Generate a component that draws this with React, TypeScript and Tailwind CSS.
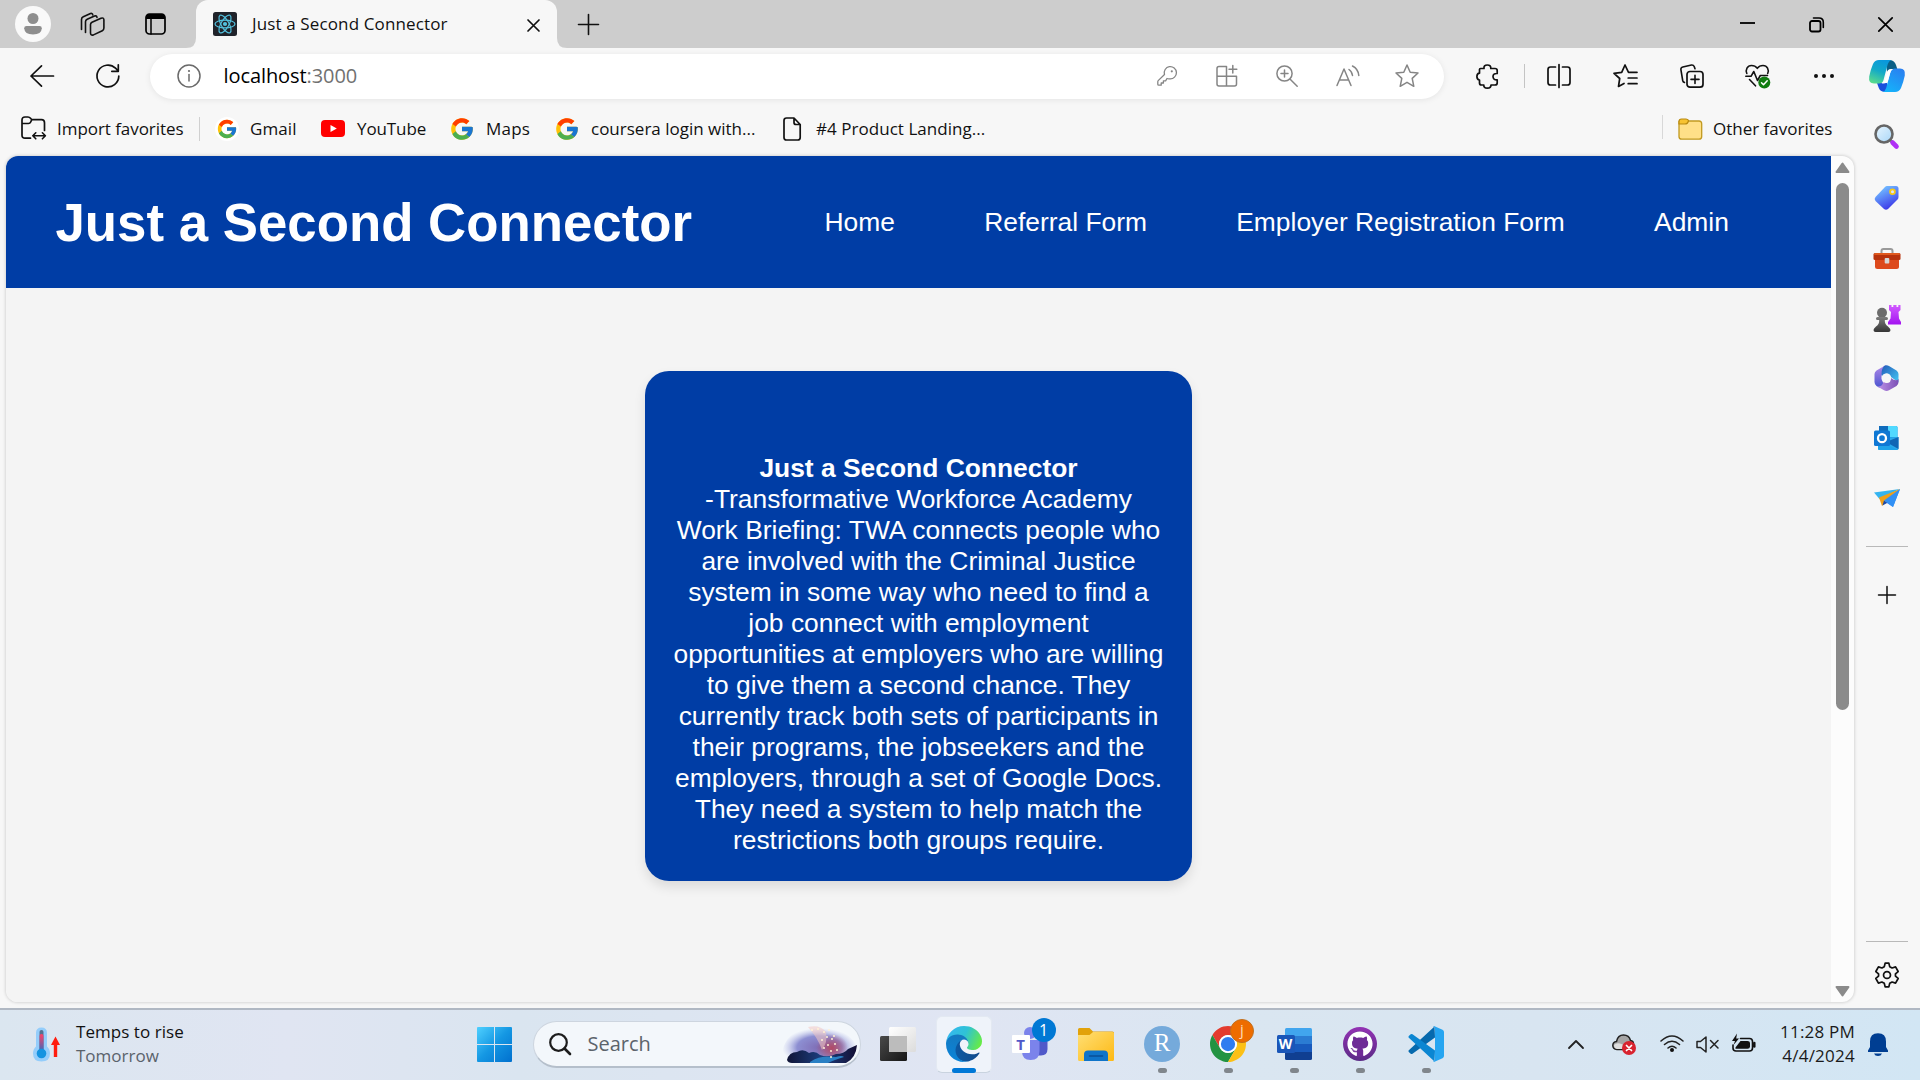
import React from "react";
import { FcGoogle } from "react-icons/fc";
import { FaGithub } from "react-icons/fa";

type SvgProps = {
  w: number;
  h: number;
  className?: string;
  children: React.ReactNode;
  box?: string;
};

function Svg({ w, h, className = "", children, box }: SvgProps) {
  return (
    <svg
      width={w}
      height={h}
      viewBox={box ?? `0 0 ${w} ${h}`}
      fill="none"
      stroke="none"
      strokeLinecap="round"
      strokeLinejoin="round"
      className={`block shrink-0 overflow-visible ${className}`}
    >
      {children}
    </svg>
  );
}

/* ---------- Tab strip ---------- */

function TabStrip() {
  return (
    <div className="flex h-12 shrink-0 bg-[#cdcdcd]">
      <div className="flex w-[196px] items-center pl-[15px]">
        <div className="flex size-9 items-center justify-center rounded-full bg-[#f9f9f9]">
          <Svg w={18} h={22}>
            <circle cx="9" cy="5.5" r="5.5" fill="#8e8e8e" />
            <path d="M2.5 13h13q2.300 0 2.300 2.300Q17.500 21.500 9 21.500T.2 15.300Q.2 13 2.500 13Z" fill="#8e8e8e" />
          </Svg>
        </div>
        <Svg w={25} h={24} className="ml-[29px]">
          <g stroke="#111" strokeWidth="1.6" fill="#cdcdcd">
            <path d="M1.500 17.500V7.500Q1.500 5.600 3.300 4.800L10.500 1.500Q12.500 1 12.800 3" />
            <path d="M5.500 20.500V9.800Q5.500 8 7.200 7.200L14.500 4Q16.700 3.300 17 5.500" />
            <path d="M10.500 12.600Q10.500 11 12 10.200L21 6.200Q23.800 5.300 23.900 7.800V16Q23.900 17.900 22.300 18.700L13.500 22.900Q10.600 23.700 10.500 21Z" />
          </g>
        </Svg>
        <Svg w={21} h={22} className="ml-[40px]">
          <rect x="1" y="1" width="19" height="20" rx="3.500" stroke="#000" strokeWidth="1.700" />
          <path d="M1 6V4.500Q1 1 4.500 1H16.500Q20 1 20 4.500V6Z" fill="#000" />
          <path d="M6 6V21" stroke="#000" strokeWidth="1.500" />
        </Svg>
      </div>
      <div className="relative flex w-[361px] items-center rounded-t-[12px] bg-[#f7f7f7] pl-[17px]">
        <Svg w={10} h={10} className="absolute -left-[10px] bottom-0">
          <path d="M10 0V10H0Q10 10 10 0Z" fill="#f7f7f7" />
        </Svg>
        <Svg w={10} h={10} className="absolute -right-[10px] bottom-0">
          <path d="M0 0V10H10Q0 10 0 0Z" fill="#f7f7f7" />
        </Svg>
        <Svg w={24} h={24}>
          <rect width="24" height="24" rx="2.500" fill="#20232a" />
          <g stroke="#53c1de" strokeWidth="1.200">
            <ellipse cx="12" cy="12" rx="10" ry="3.900" />
            <ellipse cx="12" cy="12" rx="10" ry="3.900" transform="rotate(60 12 12)" />
            <ellipse cx="12" cy="12" rx="10" ry="3.900" transform="rotate(120 12 12)" />
          </g>
          <circle cx="12" cy="12" r="2.100" fill="#53c1de" />
        </Svg>
        <span className="ml-[15px] w-[275px] pb-px text-[17px] tracking-[0.13px]">Just a Second Connector</span>
        <Svg w={13} h={13} className="mt-[2px]">
          <path d="M1 1L12 12M12 1L1 12" stroke="#111" strokeWidth="1.700" />
        </Svg>
      </div>
      <div className="flex flex-1 items-center pl-[21px]">
        <Svg w={21} h={21}>
          <path d="M10.500 .5V20.500M.5 10.500H20.500" stroke="#111" strokeWidth="1.600" />
        </Svg>
      </div>
      <div className="flex w-[180px] items-center">
        <Svg w={15} h={2} className="mb-[2px]">
          <path d="M0 1H15" stroke="#000" strokeWidth="1.800" strokeLinecap="butt" />
        </Svg>
        <Svg w={15} h={15} className="ml-[54px]">
          <rect x="1" y="4" width="10.500" height="10.500" rx="2" stroke="#000" strokeWidth="1.800" />
          <path d="M4.500 1H10Q14.300 1 14.300 5.300V10.500" stroke="#000" strokeWidth="1.600" />
        </Svg>
        <Svg w={15} h={15} className="ml-[54px]">
          <path d="M.8 .8L14.200 14.200M14.200 .8L.8 14.200" stroke="#000" strokeWidth="1.700" />
        </Svg>
      </div>
    </div>
  );
}

/* ---------- Toolbar ---------- */

function Copilot() {
  return (
    <Svg w={36} h={32} className="ml-[35px]">
      <defs>
        <linearGradient id="cpA" x1="0.600" y1="0" x2="0.200" y2="1">
          <stop offset="0" stopColor="#0a98dc" />
          <stop offset="0.450" stopColor="#12a9c8" />
          <stop offset="1" stopColor="#5bdc8b" />
        </linearGradient>
        <linearGradient id="cpB" x1="0.800" y1="0" x2="0.200" y2="1">
          <stop offset="0" stopColor="#2a80f0" />
          <stop offset="1" stopColor="#14b4fb" />
        </linearGradient>
      </defs>
      <path d="M17 0H21Q25.500 .3 27 5L28.300 9H22Q19 9 18 12Z" fill="#0b5f86" />
      <path d="M8 23H18L20 32H15.500Q11 31.500 9.800 28Z" fill="#1a4fdd" />
      <path d="M10 0H22.500Q19.800 .8 18.800 4L14.500 20Q13.500 23.500 10 23.500H5Q-.8 23.500 .2 16.500Q1.800 9 4 4Q5.800 0 10 0Z" fill="url(#cpA)" />
      <path d="M26 32H13.500Q16.200 31.200 17.200 28L21.500 12Q22.500 8.500 26 8.500H31Q36.800 8.500 35.800 15.500Q34.200 23 32 28Q30.200 32 26 32Z" fill="url(#cpB)" />
      <path d="M18.300 12Q19.200 9.300 22.300 9.300H24Q21.800 10 21 13.500L19 20.500Q18 23.400 14.500 23.400H12.500Q15 22.500 15.800 20Z" fill="#fff" />
    </Svg>
  );
}

function Toolbar() {
  return (
    <div className="flex h-[57px] shrink-0 items-center pl-[30px]">
      <Svg w={24} h={22} className="mb-[2px]">
        <path d="M23.500 11H1M11.500 .8L1 11L11.500 21.200" stroke="#111" strokeWidth="1.700" />
      </Svg>
      <Svg w={24} h={24} className="mb-px ml-[42px]">
        <path d="M22.800 12A10.900 10.900 0 1 1 19.500 4.200L22.300 7M22.300 .8V7.300H15.800" stroke="#111" strokeWidth="1.700" />
      </Svg>
      <div className="ml-[30px] flex h-[45px] w-[1294px] items-center rounded-full bg-white pb-px pl-[27px] shadow-[0_1px_6px_rgba(0,0,0,0.08)]">
        <Svg w={24} h={24}>
          <circle cx="12" cy="12" r="11" stroke="#6a6a6a" strokeWidth="1.500" />
          <path d="M12 10.500V17" stroke="#6a6a6a" strokeWidth="1.500" />
          <circle cx="12" cy="7" r="1.100" fill="#6a6a6a" />
        </Svg>
        <span className="ml-[22.500px] w-[933.500px] text-[20px] tracking-[-0.08px] text-black">
          localhost<span className="text-[#717171]">:3000</span>
        </span>
        <Svg w={20} h={20}>
          <path d="M12.800 12.800A6.100 6.100 0 1 0 7.500 8.500L1.200 14.600Q.8 15 .8 15.700V18.300Q.8 19.200 1.700 19.200H4.200V17H6.400V14.800H8.600L10 12.500Q11.500 13.100 12.800 12.800Z" stroke="#858585" strokeWidth="1.300" />
          <circle cx="14.800" cy="5.300" r="1.100" fill="#858585" />
        </Svg>
        <Svg w={22} h={22} className="ml-[39px]">
          <path d="M10.500 1.500H3Q1 1.500 1 3.500V19Q1 21 3 21H18.500Q20.500 21 20.500 19V11.200H1M10.500 1.500V21M16.800 .5V8M13 4.200H20.800" stroke="#858585" strokeWidth="1.500" />
        </Svg>
        <Svg w={22} h={22} className="ml-[38px]">
          <circle cx="8.500" cy="8.500" r="7.600" stroke="#858585" strokeWidth="1.500" />
          <path d="M14.200 14.200L21.200 21.200M8.500 5V12M5 8.500H12" stroke="#858585" strokeWidth="1.500" />
        </Svg>
        <Svg w={24} h={22} className="ml-[38px]">
          <path d="M1 20.500L8 4L15 20.500M3.500 15H12.500M13 4.500Q16 6.500 16.500 10.500M16.500 1Q22.300 4 22.800 10.500" stroke="#858585" strokeWidth="1.500" />
        </Svg>
        <Svg w={24} h={24} className="ml-[35px]">
          <path d="M12 1L15.200 8.300L23 9L17.200 14.400L18.800 22.300L12 18.300L5.200 22.300L6.800 14.400L1 9L8.800 8.300Z" stroke="#858585" strokeWidth="1.500" />
        </Svg>
      </div>
      <div className="mb-px flex items-center">
        <Svg w={23} h={25} className="ml-[32px]">
          <path d="M4.500 4.500H8Q7.500 1 11.300 1T14.800 4.500H19Q21.200 4.500 21.200 6.500V9.500Q17 9.200 17 12.600T21.200 15.800V19Q21.200 21 19 21H15Q15 24.200 11.300 24.200T7.800 21H5.500Q3.500 21 3.500 19V16Q.9 15.800 .9 12.600T3.500 9.200V5.500Q3.500 4.500 4.500 4.500Z" stroke="#111" strokeWidth="1.700" />
        </Svg>
        <div className="ml-[25px] h-6 w-px bg-[#c4c4c4]" />
        <Svg w={24} h={24} className="ml-[22px]">
          <path d="M12 .5V23.500M8.500 3H3.500Q1 3 1 5.500V18.500Q1 21 3.500 21H8.500M15.500 3H20.500Q23 3 23 5.500V18.500Q23 21 20.500 21H15.500" stroke="#111" strokeWidth="1.700" />
        </Svg>
        <Svg w={25} h={24} className="ml-[42px]">
          <path d="M18 8.300H15.500L12 1L8.700 8.300L1 9.300L6.700 14.500L5.500 22.500L11 19.500M16.500 8.300H24M15.200 14H24M15.200 19.700H24" stroke="#111" strokeWidth="1.700" />
        </Svg>
        <Svg w={24} h={24} className="ml-[42px]">
          <path d="M4.500 18.500Q3 18 2.700 16.500L.9 5.600Q.7 3.500 2.800 3L11.500 1Q13.500 .8 14.200 2.500L15 4.800" stroke="#111" strokeWidth="1.600" />
          <rect x="7" y="7.500" width="16" height="15.700" rx="3" stroke="#111" strokeWidth="1.700" />
          <path d="M15 11.300V19.500M11 15.400H19" stroke="#111" strokeWidth="1.600" />
        </Svg>
        <Svg w={25} h={24} className="ml-[41px]">
          <path d="M1.800 9.500C.2 6 2.300 1.500 6.500 1.500C9.500 1.500 11.300 3 12.300 4.300C13.300 3 15 1.500 18 1.500C22.300 1.500 24.300 6 22.700 9.500M.8 12.300H6L8.800 7.500L12.500 16.500L15.300 11.500H22.500M4.500 15.500L10.500 21.800" stroke="#111" strokeWidth="1.600" />
          <circle cx="19.300" cy="18.500" r="6" fill="#107c10" />
          <path d="M16.500 18.700L18.500 20.700L22.200 16.700" stroke="#fff" strokeWidth="1.500" />
        </Svg>
        <Svg w={20} h={4} className="ml-[44px]">
          <circle cx="2" cy="2" r="2" fill="#111" />
          <circle cx="10" cy="2" r="2" fill="#111" />
          <circle cx="18" cy="2" r="2" fill="#111" />
        </Svg>
        <Copilot />
      </div>
    </div>
  );
}

/* ---------- Favorites bar ---------- */

function FavoritesBar() {
  return (
    <div className="flex h-[51px] shrink-0 items-center pb-[4px] pl-[21px] text-[17px]">
      <Svg w={25} h={24} className="mb-px">
        <path d="M9.500 22.200H4Q1 22.200 1 19.200V4Q1 1 4 1H7Q8.500 1 9.500 2.200L10.800 3.700H20.500Q23.500 3.700 23.500 6.700V14.500M1 7.500H7.500Q9 7.500 9.700 6L10.800 3.700" stroke="#111" strokeWidth="1.700" />
        <path d="M12.200 19.800H24M14.800 16.800L11.800 19.800L14.800 22.800M21.400 16.800L24.400 19.800L21.400 22.800" stroke="#111" strokeWidth="1.600" />
      </Svg>
      <span className="ml-[11px] w-[142px] tracking-[-0.05px]">Import favorites</span>
      <div className="h-6 w-px bg-[#d0d0d0]" />
      <div className="ml-[15px] flex size-6 items-center justify-center rounded-full bg-white">
        <FcGoogle size={22} />
      </div>
      <span className="ml-[11px] w-[71px] tracking-[0.1px]">Gmail</span>
      <Svg w={24} h={17}>
        <rect width="24" height="17" rx="4" fill="#f00" />
        <path d="M9.500 5V12L15.800 8.500Z" fill="#fff" />
      </Svg>
      <span className="ml-[12px] w-[92px] tracking-[-0.1px]">YouTube</span>
      <FcGoogle size={26} className="shrink-0" />
      <span className="ml-[11px] w-[68px] tracking-[0.2px]">Maps</span>
      <FcGoogle size={26} className="shrink-0" />
      <span className="ml-[11px] w-[192px]">coursera login with...</span>
      <Svg w={18} h={24}>
        <path d="M1 3.500Q1 1 3.500 1H11L17.200 7.500V20.500Q17.200 23 14.700 23H3.500Q1 23 1 20.500ZM11 1V5.500Q11 7.500 13 7.500H17.200" stroke="#111" strokeWidth="1.700" />
      </Svg>
      <span className="ml-[15px] w-[846px] tracking-[0.04px]">#4 Product Landing...</span>
      <div className="mb-1 h-6 w-px bg-[#d8d8d8]" />
      <Svg w={25} h={22} className="ml-[15px]">
        <path d="M1 3.500V18.500Q1 21.200 3.700 21.200H21Q23.700 21.200 23.700 18.500V6Q23.700 3 21 3H10Z" fill="#ffe088" stroke="#c29a20" strokeWidth="1.300" />
        <path d="M1 3.500Q1 1 3.500 1H8Q11 1.500 10.300 3.500Q9.500 6 7 6H1Z" fill="#f7c331" stroke="#b98a10" strokeWidth="1.200" />
      </Svg>
      <span className="ml-[10px]">Other favorites</span>
    </div>
  );
}

/* ---------- Page ---------- */

const links = ["Home", "Referral Form", "Employer Registration Form", "Admin"];

function WebPage() {
  return (
    <div className="ml-[6px] flex h-[846px] w-[1848px] overflow-hidden rounded-[12px] bg-[#fcfcfc] shadow-[0_0_3px_1px_rgba(0,0,0,0.13)]">
      <div className="w-[1825px] bg-[#f4f4f4] font-['Liberation_Sans',Arial,sans-serif] text-white">
        <nav className="flex h-[132px] items-center bg-[#003da5] pl-[49.500px]">
          <h1 className="w-[769px] pt-[2px] text-[52.800px] leading-[60px] font-bold">Just a Second Connector</h1>
          <ul className="flex gap-[89.300px] text-[26.400px] leading-[31px]">
            {links.map((label) => (
              <li key={label} className="whitespace-nowrap">{label}</li>
            ))}
          </ul>
        </nav>
        <section className="mx-auto mt-[83px] h-[510px] w-[547px] rounded-[24px] bg-[#003da5] px-7 pt-[82px] text-center text-[26.400px] leading-[31px] shadow-[0_6px_12px_rgba(0,0,0,0.1)]">
          <h2 className="font-bold">Just a Second Connector</h2>
          <p>
            -Transformative Workforce Academy Work Briefing: TWA connects people who are involved with
            the Criminal Justice system in some way who need to find a job connect with employment
            opportunities at employers who are willing to give them a second chance. They currently
            track both sets of participants in their programs, the jobseekers and the employers,
            through a set of Google Docs. They need a system to help match the restrictions both groups
            require.
          </p>
        </section>
      </div>
      <div className="flex flex-1 flex-col items-center pt-[6px] pb-[5px]">
        <Svg w={15} h={11}>
          <path d="M7.500 1.500L13.500 10H1.500Z" fill="#8b8b8b" stroke="#8b8b8b" strokeWidth="2" />
        </Svg>
        <div className="mt-[10px] h-[527px] w-[13px] rounded-full bg-[#8b8b8b]" />
        <Svg w={15} h={11} className="mt-auto">
          <path d="M7.500 9.500L13.500 1H1.500Z" fill="#8b8b8b" stroke="#8b8b8b" strokeWidth="2" />
        </Svg>
      </div>
    </div>
  );
}

/* ---------- Sidebar ---------- */

function SideSlot({ children }: { children: React.ReactNode }) {
  return <div className="flex h-[60.200px] w-full shrink-0 items-center justify-center">{children}</div>;
}

function Sidebar() {
  return (
    <aside className="flex w-[63px] flex-col items-center pt-[2px]">
      <SideSlot>
        <Svg w={25} h={25} className="-mt-[2px]">
          <defs>
            <linearGradient id="lens" x1="0" y1="0" x2="1" y2="1">
              <stop offset="0" stopColor="#e9f6ff" />
              <stop offset="1" stopColor="#a8d6f8" />
            </linearGradient>
          </defs>
          <path d="M16 16L19 19" stroke="#888" strokeWidth="3" />
          <path d="M18.500 18.500L22.500 22.500" stroke="#b030f5" strokeWidth="4.600" />
          <circle cx="10" cy="10" r="8.500" fill="url(#lens)" stroke="#666" strokeWidth="2.600" />
        </Svg>
      </SideSlot>
      <SideSlot>
        <Svg w={25} h={25}>
          <defs>
            <linearGradient id="tag" x1="0.200" y1="0.200" x2="0.600" y2="1">
              <stop offset="0" stopColor="#6db3ff" />
              <stop offset="1" stopColor="#3b35e8" />
            </linearGradient>
          </defs>
          <path d="M13 1H22Q24.500 1 24.500 3.500V12Q24.500 13.500 23.500 14.500L14 24Q12 25.500 10 24L1.500 16Q-.3 14 1.500 12L11 2Q12 1 13 1Z" fill="url(#tag)" />
          <circle cx="18.500" cy="6.800" r="2.400" fill="#dbe4ff" stroke="#f8c916" strokeWidth="1.800" />
        </Svg>
      </SideSlot>
      <SideSlot>
        <Svg w={28} h={21} className="mt-[2px]">
          <path d="M8.500 6V3Q8.500 1 10.500 1H17.500Q19.500 1 19.500 3V6" stroke="#9a9a9a" strokeWidth="2" />
          <path d="M2 10H26V18.500Q26 21 23.500 21H4.500Q2 21 2 18.500Z" fill="#dd4a1d" />
          <path d="M2 5H26Q27.500 5 27.500 6.500V11Q27.500 12 26 12H2Q.5 12 .5 11V6.500Q.5 5 2 5Z" fill="#b8330c" />
          <path d="M2 5H26L27 7H1Z" fill="#e0591d" />
          <rect x="11.700" y="10" width="4.600" height="5.500" rx="1" fill="#d7d7d7" />
        </Svg>
      </SideSlot>
      <SideSlot>
        <Svg w={28} h={28}>
          <defs>
            <linearGradient id="rook" x1="0" y1="0" x2="0" y2="1">
              <stop offset="0" stopColor="#d15bff" />
              <stop offset="1" stopColor="#a312f0" />
            </linearGradient>
            <linearGradient id="pawn" x1="0" y1="0" x2="0" y2="1">
              <stop offset="0" stopColor="#7c7c7c" />
              <stop offset="1" stopColor="#363636" />
            </linearGradient>
          </defs>
          <path d="M16 1H18.500V3H20.300V1H23.500V3H25.300V1H27.500V6L25.500 8L26 14.500L28 18V20.500H15V18L17.500 14.500L18 8L16 6Z" fill="url(#rook)" />
          <circle cx="9" cy="8.700" r="5" fill="#6c6c6c" />
          <path d="M4.500 13Q3 13 3 14.500T4.500 16H6.200Q6.500 20 3 22.500Q.5 24.500 .5 26Q.5 28 2.500 28H15.500Q17.500 28 17.500 26Q17.500 24.500 15 22.500Q11.500 20 11.800 16H13.500Q15 16 15 14.500T13.500 13Z" fill="url(#pawn)" />
        </Svg>
      </SideSlot>
      <SideSlot>
        <Svg w={25} h={26}>
          <defs>
            <linearGradient id="m1" x1="0" y1="0" x2="0" y2="1">
              <stop offset="0" stopColor="#b48ae8" />
              <stop offset="1" stopColor="#4a55d0" />
            </linearGradient>
            <linearGradient id="m2" x1="0" y1="0" x2="1" y2="1">
              <stop offset="0" stopColor="#235bb8" />
              <stop offset="1" stopColor="#45c8f5" />
            </linearGradient>
            <linearGradient id="m3" x1="0" y1="0" x2="1" y2="0">
              <stop offset="0" stopColor="#bd93e8" />
              <stop offset="1" stopColor="#7b4fb5" />
            </linearGradient>
          </defs>
          <path d="M12 0L2.500 5.500Q.5 7 .5 9V17Q.5 19.500 2.500 21L5 22.500Q8.500 23 9 20V17.500L7.500 14V11Q7.800 8.500 10 7.800L12 6.500Z" fill="url(#m1)" />
          <path d="M10 1Q12.500 -.5 15 1L22.500 5.500Q24.500 7 24.500 9V17.500L17 12Q16 8.500 12.500 8.500Q9.500 8.500 8 11Q6.500 6 10 1Z" fill="url(#m2)" />
          <path d="M24.500 14V17Q24.500 19.500 22.500 21L15 25.300Q12.500 26.500 10 25.300L3.500 21.500Q8 22 9.500 17Q13 19 16 17L17 13Q22 17 24.500 14Z" fill="url(#m3)" />
          <circle cx="12.500" cy="13" r="4.600" fill="#f7f7f7" />
        </Svg>
      </SideSlot>
      <SideSlot>
        <Svg w={25} h={24}>
          <rect x="5" y="0" width="18.500" height="14" rx="1.500" fill="#1490df" />
          <path d="M14 0H22Q23.500 0 23.500 1.500V11H14Z" fill="#50d9ff" />
          <path d="M5 2V0H14V6H5Z" fill="#0f6cbd" />
          <path d="M4 12L24.500 11V22.500Q24.500 24 23 24H5.500Q4 24 4 22.500Z" fill="#28a8ea" />
          <path d="M24.500 11V23L12 16Z" fill="#1066b5" />
          <path d="M4 14L24 24H5.500Q4 24 4 22.500Z" fill="#1ea3ea" />
          <rect x="0" y="4.500" width="16" height="15.500" rx="1.500" fill="#0f78d4" />
          <circle cx="8" cy="12.200" r="4" stroke="#fff" strokeWidth="2.300" />
        </Svg>
      </SideSlot>
      <SideSlot>
        <Svg w={26} h={18} className="mb-px">
          <path d="M0 3.500L26 0L5.500 10Z" fill="#35b4f0" />
          <path d="M26 0L19 18L10 12Z" fill="#3190f5" />
          <path d="M26 0L8 17L5 8.500Z" fill="#f0a01a" />
          <path d="M8.500 16.500L13.500 13.800L10 11.500Z" fill="#1c49a8" />
          <path d="M26 0L10 11.500L19 18Z" fill="#3190f5" />
        </Svg>
      </SideSlot>
      <div className="mt-[18px] h-px w-[42px] bg-[#b9b9b9]" />
      <Svg w={18} h={18} className="mt-[39px]">
        <path d="M9 .5V17.500M.5 9H17.500" stroke="#111" strokeWidth="1.500" />
      </Svg>
      <div className="mt-auto h-px w-[42px] bg-[#b9b9b9]" />
      <Svg w={26} h={26} box="0 0 24 24" className="mt-[20px] mb-[20px]">
        <path
          d="M10.300 1H13.700L14.500 4.300L16.700 5.500L19.900 4.500L22.300 8.800L19.800 11V13L22.300 15.200L19.900 19.500L16.700 18.500L14.500 19.700L13.700 23H10.300L9.500 19.700L7.300 18.500L4.100 19.500L1.700 15.200L4.200 13V11L1.700 8.800L4.100 4.500L7.300 5.500L9.500 4.300Z"
          stroke="#111"
          strokeWidth="1.600"
        />
        <circle cx="12" cy="12" r="3.200" stroke="#111" strokeWidth="1.600" />
      </Svg>
    </aside>
  );
}

/* ---------- Taskbar ---------- */

function TaskSlot({ children, dot = false }: { children: React.ReactNode; dot?: boolean }) {
  return (
    <div className="relative flex h-[57px] w-[66px] shrink-0 items-center justify-center">
      {children}
      {dot && <div className="absolute bottom-0 left-[29px] h-[5px] w-[9px] rounded-full bg-[#80868c]" />}
    </div>
  );
}

function SearchArt() {
  return (
    <Svg w={76} h={40}>
      <defs>
        <radialGradient id="sky" cx="0.500" cy="0.600" r="0.500">
          <stop offset="0" stopColor="#7e6cb4" />
          <stop offset="0.600" stopColor="#8d8fd2" />
          <stop offset="1" stopColor="#b9bfe9" stopOpacity="0" />
        </radialGradient>
        <radialGradient id="glow" cx="0.500" cy="0.500" r="0.500">
          <stop offset="0" stopColor="#b34a64" />
          <stop offset="1" stopColor="#b34a64" stopOpacity="0" />
        </radialGradient>
        <linearGradient id="rocks" x1="0" y1="0" x2="1" y2="0">
          <stop offset="0" stopColor="#101436" />
          <stop offset="0.500" stopColor="#1d3f80" />
          <stop offset="1" stopColor="#140f33" />
        </linearGradient>
      </defs>
      <path d="M0 30Q2 12 20 5Q36 -4 54 4Q68 10 75 22Q74 36 60 39H8Q2 37 0 30Z" fill="url(#sky)" />
      <ellipse cx="50" cy="24" rx="16" ry="14" fill="url(#glow)" />
      <path d="M26 3Q38 0 44 8Q46 18 40 26Q36 14 26 3Z" fill="#f3c9c4" opacity="0.550" />
      <path d="M5 36Q7 28 15 28Q21 24 27 29Q33 26 38 31Q46 34 54 30Q62 30 66 25L75 21Q74 34 64 39H10Q6 39 5 36Z" fill="url(#rocks)" />
      <path d="M28 38Q38 31 54 33Q60 31 62 33Q52 36 46 39H28Z" fill="#2a80c4" />
      <g fill="#fff2d4">
        {[[36, 5], [42, 8], [47, 6], [45, 13], [50, 15], [40, 16], [53, 20], [46, 21], [55, 26], [49, 27], [52, 12], [42, 24], [30, 6], [49, 33]].map(
          ([x, y]) => (
            <circle key={`${x}-${y}`} cx={x} cy={y} r="1" />
          ),
        )}
      </g>
    </Svg>
  );
}

function Taskbar() {
  return (
    <div className="flex h-[72px] shrink-0 items-center border-t-2 border-[#b0b8c3] bg-[linear-gradient(to_right,#dbe6f0,#e0e5f2_15%,#dae5f0_27%,#e0e5f3_50%,#dae6f1_65%,#d8e5f1_80%,#d2e6f4)] pb-[2px]">
      <div className="flex w-[477px] items-center pl-[33px]">
        <Svg w={27} h={35}>
          <defs>
            <linearGradient id="thermo" gradientUnits="userSpaceOnUse" x1="8" y1="8" x2="8" y2="26">
              <stop offset="0" stopColor="#f5436b" />
              <stop offset="1" stopColor="#2072c8" />
            </linearGradient>
          </defs>
          <path d="M3 6Q3 .5 8.500 .5T14 6V19.500Q17 22 17 26.500Q17 34.500 8.500 34.500T0 26.500Q0 22 3 19.500Z" fill="#94cdfb" />
          <path d="M8.500 5V25" stroke="#56718f" strokeWidth="4" />
          <path d="M8.500 9V25" stroke="url(#thermo)" strokeWidth="4" />
          <circle cx="8.500" cy="26.500" r="4.800" fill="#1493e0" />
          <path d="M22.500 9.500L27 18H24.200V30H20.800V18H18Z" fill="#ff1c0e" />
        </Svg>
        <div className="ml-[16px] flex flex-col pb-px text-[17px] leading-6">
          <span className="tracking-[0.05px] text-[#111]">Temps to rise</span>
          <span className="text-[#5a626b]">Tomorrow</span>
        </div>
      </div>
      <Svg w={35} h={35}>
        <defs>
          <linearGradient id="win" gradientUnits="userSpaceOnUse" x1="0" y1="0" x2="35" y2="35">
            <stop offset="0" stopColor="#4fd0ff" />
            <stop offset="0.500" stopColor="#1497e3" />
            <stop offset="1" stopColor="#0170ce" />
          </linearGradient>
        </defs>
        <path d="M1 0H17V17H0V1Q0 0 1 0ZM18 0H34Q35 0 35 1V17H18ZM0 18H17V35H1Q0 35 0 34ZM18 18H35V34Q35 35 34 35H18Z" fill="url(#win)" />
      </Svg>
      <div className="ml-[21px] flex h-[47px] w-[328px] items-center rounded-full border border-b-2 border-[#cdd5df] border-b-[#b5bfcb] bg-[#f3f7fb] pl-[15px]">
        <Svg w={22} h={22}>
          <circle cx="9.500" cy="9.500" r="8.300" stroke="#1c1c1c" strokeWidth="2.200" />
          <path d="M15.500 15.500L21 21" stroke="#1c1c1c" strokeWidth="2.600" />
        </Svg>
        <span className="ml-[16.500px] w-[194.500px] text-[20px] text-[#5c636b]">Search</span>
        <SearchArt />
      </div>
      <div className="ml-[4px] flex items-center">
        <TaskSlot>
          <Svg w={36} h={34}>
            <defs>
              <linearGradient id="tv" x1="0" y1="0" x2="1" y2="1">
                <stop offset="0" stopColor="#4a4a4a" />
                <stop offset="1" stopColor="#161616" />
              </linearGradient>
              <linearGradient id="tvb" x1="0" y1="0" x2="1" y2="1">
                <stop offset="0" stopColor="#fff" />
                <stop offset="1" stopColor="#dcdcdc" />
              </linearGradient>
            </defs>
            <rect x="0" y="9" width="27" height="25" rx="1.500" fill="url(#tv)" />
            <rect x="9" y="0" width="27" height="25" rx="1.500" fill="url(#tvb)" />
            <path d="M9 9H27V25H10Q9 25 9 24Z" fill="#bcbcbc" />
          </Svg>
        </TaskSlot>
        <TaskSlot>
          <div className="absolute inset-y-0 left-[5px] w-14 rounded-[6px] border border-[#e3e9f2] border-b-[#c9d3df] bg-[#eff3fa]" />
          <Svg w={36} h={36} box="0 0 256 256" className="relative">
            <defs>
              <linearGradient id="eg1" x1="0" y1="0" x2="1" y2="0">
                <stop offset="0" stopColor="#0c59a4" />
                <stop offset="1" stopColor="#114a8b" />
              </linearGradient>
              <linearGradient id="eg2" x1="0.600" y1="0" x2="0.300" y2="1">
                <stop offset="0" stopColor="#1678bd" />
                <stop offset="1" stopColor="#0a84d9" />
              </linearGradient>
              <linearGradient id="eg3" x1="0" y1="0.300" x2="1" y2="0.600">
                <stop offset="0" stopColor="#35b8f1" />
                <stop offset="0.500" stopColor="#2fc2d5" />
                <stop offset="1" stopColor="#66eb46" />
              </linearGradient>
            </defs>
            <path d="M231.070 190.540c-3.400 1.780-6.910 3.340-10.500 4.680a101.290 101.290 0 0 1-35.400 6.320c-46.670 0-87.320-32.100-87.320-73.300a31.130 31.130 0 0 1 16.200-27.140c-42.200 1.770-53.050 45.740-53.050 71.500 0 72.840 67.150 80.230 81.620 80.230 7.800 0 19.560-2.270 26.610-4.500l1.300-.43a128.340 128.340 0 0 0 66.600-52.800 4 4 0 0 0-6.060-5.560Z" fill="url(#eg1)" />
            <path d="M105.730 241.420a79.200 79.200 0 0 1-22.740-21.340 80.720 80.720 0 0 1 29.530-119.800c3.120-1.480 8.450-4.140 15.540-4.020a32.360 32.360 0 0 1 25.690 13 31.880 31.880 0 0 1 6.360 18.660c0-.21 24.460-79.600-80-79.600C36.200 48.320 0 90 0 126.500a130.180 130.180 0 0 0 12.110 56.030A128 128 0 0 0 168.600 249.800a75.500 75.500 0 0 1-62.780-8.340Z" fill="url(#eg2)" />
            <path d="M152.330 148.860c-.81 1.050-3.300 2.500-3.300 5.660 0 2.610 1.700 5.120 4.720 7.230 14.380 10 41.490 8.680 41.560 8.680a59.560 59.560 0 0 0 30.270-8.350A61.380 61.380 0 0 0 256 109.180c.26-22.410-8-37.310-11.340-43.910C223.460 23.840 177.720 0 128 0A128 128 0 0 0 0 126.200c.48-36.540 36.800-66.050 80-66.050 3.500 0 23.460.34 42 10.070 16.340 8.580 24.900 18.940 30.850 29.210 6.180 10.670 7.280 24.150 7.280 29.520 0 5.370-2.740 13.330-7.800 19.900Z" fill="url(#eg3)" />
          </Svg>
          <div className="absolute bottom-0 left-[21px] h-[5px] w-6 rounded-full bg-[#0078d7]" />
        </TaskSlot>
        <TaskSlot>
          <div className="relative ml-[7px] h-[34px] w-11">
            <Svg w={44} h={34}>
              <circle cx="29" cy="6" r="5" fill="#4f56c6" />
              <path d="M22 13H35.500V22Q35.500 28.500 29 28.500H22Z" fill="#5059c9" />
              <circle cx="18" cy="6" r="6" fill="#7b83eb" />
              <path d="M10 13H27.500V24Q27.500 33 18.700 33T10 24Z" fill="#7b83eb" />
              <rect x="0" y="8" width="18" height="18" rx="1" fill="#fff" />
            </Svg>
            <span className="absolute top-[8px] left-0 w-[18px] text-center text-[15px] leading-[18px] font-bold text-[#5059c9]">T</span>
            <span className="absolute -top-[9px] left-[20px] flex size-6 items-center justify-center rounded-full bg-[#0078d4] text-[16px] text-white">1</span>
          </div>
        </TaskSlot>
        <TaskSlot>
          <Svg w={36} h={33}>
            <defs>
              <linearGradient id="fold" x1="0" y1="0" x2="1" y2="1">
                <stop offset="0" stopColor="#ffdf75" />
                <stop offset="1" stopColor="#fdb914" />
              </linearGradient>
            </defs>
            <path d="M0 1.500Q0 0 1.500 0H11.500L15 3.500H34.500Q36 3.500 36 5V10H0Z" fill="#e2a20a" />
            <path d="M0 7H11.500L15 4H34.500Q36 4 36 5.500V31.500Q36 33 34.500 33H1.500Q0 33 0 31.500Z" fill="url(#fold)" />
            <path d="M6 33V26.500Q6 22.500 10 22.500H26Q30 22.500 30 26.500V33Z" fill="#0f74c9" />
            <path d="M11.500 28H24.500" stroke="#0a4f96" strokeWidth="1.600" />
          </Svg>
        </TaskSlot>
        <TaskSlot dot>
          <div className="flex size-9 items-center justify-center rounded-full bg-[#75aadb] pb-[2px] font-['Liberation_Serif',serif] text-[25px] text-white">R</div>
        </TaskSlot>
        <TaskSlot dot>
          <div className="relative size-9">
            <Svg w={36} h={36} box="0 0 48 48">
              <path d="M24 12h20.780A24 24 0 0 0 3.220 12l10.390 18A12 12 0 0 1 24 12Z" fill="#e33b2e" />
              <path d="M13.610 30 3.220 12A24 24 0 0 0 24 48l10.390-18A12 12 0 0 1 13.610 30Z" fill="#229342" />
              <path d="M34.390 30 24 48A24 24 0 0 0 44.780 12H24a12 12 0 0 1 10.390 18Z" fill="#fcc016" />
              <circle cx="24" cy="24" r="12" fill="#fff" />
              <circle cx="24" cy="24" r="9.500" fill="#2f7cf0" />
            </Svg>
            <span className="absolute -top-[7px] left-[20px] flex size-6 items-center justify-center rounded-full border border-[#c0701f] bg-[#ee6c00] pb-[3px] text-[15px] text-[#ffd9b8]">j</span>
          </div>
        </TaskSlot>
        <TaskSlot dot>
          <div className="relative h-8 w-[35px]">
            <Svg w={35} h={32}>
              <path d="M8 1.500Q8 0 9.500 0H33.500Q35 0 35 1.500V8H8Z" fill="#41a5ee" />
              <path d="M8 8H35V16H8Z" fill="#2b7cd3" />
              <path d="M8 16H35V24H8Z" fill="#185abd" />
              <path d="M8 24H35V30.500Q35 32 33.500 32H9.500Q8 32 8 30.500Z" fill="#103f91" />
              <rect x="0" y="7" width="18" height="18" rx="1.500" fill="#1a56b8" />
            </Svg>
            <span className="absolute top-[7px] left-0 w-[18px] text-center text-[14px] leading-[18px] font-bold text-white">W</span>
          </div>
        </TaskSlot>
        <TaskSlot dot>
          <div className="flex size-[34px] items-center justify-center rounded-full bg-[linear-gradient(#9332b4,#5b2b86)]">
            <div className="flex size-[26px] items-center justify-center rounded-full bg-[#6f2b96]">
              <FaGithub size={26} className="text-white" />
            </div>
          </div>
        </TaskSlot>
        <TaskSlot dot>
          <Svg w={36} h={36}>
            <path d="M26.500 .5L27 11.500L4.500 27.800Q3.500 28.400 2.700 27.700L.8 25.900Q0 24.900 .8 24.200Z" fill="#0669ad" />
            <path d="M26.500 35.500L27 24.500L4.500 8.200Q3.500 7.600 2.700 8.300L.8 10.100Q0 11.100 .8 11.800Z" fill="#0b86d2" />
            <path d="M26.500 .2L34.500 3.800Q36 4.500 36 6V30Q36 31.500 34.500 32.200L26.500 35.800Q25.500 36 25 35Q27 35.500 27 33V3Q27 .5 25 1Q25.500 0 26.500 .2Z" fill="#26a5f1" />
          </Svg>
        </TaskSlot>
      </div>
      <div className="ml-[109px] flex flex-1 items-center">
        <Svg w={16} h={9}>
          <path d="M1 8L8 1L15 8" stroke="#222" strokeWidth="1.800" />
        </Svg>
        <Svg w={25} h={21} className="mt-px ml-[28px]">
          <path d="M5 15.500Q.8 15 .8 11.500T4.500 7.500Q5.800 1 11.500 1T18.500 6.500Q21.500 7 21.500 10V15.500Z" fill="#a5a5a5" stroke="#222" strokeWidth="1.500" />
          <path d="M2 11Q4 8.500 8 9.500T17 15H5Q2 14.500 2 11Z" fill="#dedede" />
          <circle cx="17" cy="14" r="7" fill="#d8232f" />
          <path d="M14.500 11.500L19.500 16.500M19.500 11.500L14.500 16.500" stroke="#fff" strokeWidth="1.700" />
        </Svg>
        <Svg w={24} h={17} className="mb-px ml-[23px]">
          <path d="M1 6Q12 -4 23 6M4.500 9.500Q12 3 19.500 9.500M8 13Q12 9.500 16 13" stroke="#222" strokeWidth="1.600" />
          <circle cx="12" cy="15" r="2" fill="#111" />
        </Svg>
        <Svg w={23} h={17} className="ml-[12px]">
          <path d="M1 5.500H4.500L10 1V16L4.500 11.500H1Z" stroke="#222" strokeWidth="1.500" />
          <path d="M14.500 4.500L22 12M22 4.500L14.500 12" stroke="#222" strokeWidth="1.500" />
        </Svg>
        <Svg w={24} h={18} className="mb-[3px] ml-[13px]">
          <path d="M8.500 4.500H17.500Q20.500 4.500 20.500 7.500V14Q20.500 17 17.500 17H4Q1 17 1 14V11" stroke="#111" strokeWidth="1.600" />
          <path d="M8.500 7H15.500Q18 7 18 9V12.500Q18 14.700 15.500 14.700H3.500V13.500Z" fill="#111" />
          <path d="M22.300 9V12.500" stroke="#111" strokeWidth="2.500" />
          <path d="M5 -.5L0 7H3L1.500 11L7 4.500H4.200Z" fill="#111" />
        </Svg>
        <div className="flex w-[99px] flex-col items-end pb-px text-[17px] leading-6 text-[#1a1a1a]">
          <span className="tracking-[0.200px]">11:28 PM</span>
          <span className="tracking-[0.250px]">4/4/2024</span>
        </div>
        <Svg w={20} h={23} className="ml-[12.500px]">
          <path d="M2 8.500Q2 .3 10 .3T18 8.500V14L20 17.500V19H0V17.500L2 14ZM6 20.500H14Q13 23 10 23T6 20.500Z" fill="#003e92" />
        </Svg>
      </div>
    </div>
  );
}

export default function App() {
  return (
    <div className="flex h-[1080px] w-[1920px] flex-col overflow-hidden bg-[#f7f7f7] font-['Open_Sans','Noto_Sans',sans-serif] whitespace-nowrap text-[#111]">
      <TabStrip />
      <Toolbar />
      <div className="flex h-[903px] shrink-0">
        <div className="w-[1855px] whitespace-nowrap">
          <FavoritesBar />
          <div className="whitespace-normal">
            <WebPage />
          </div>
        </div>
        <Sidebar />
      </div>
      <Taskbar />
    </div>
  );
}
